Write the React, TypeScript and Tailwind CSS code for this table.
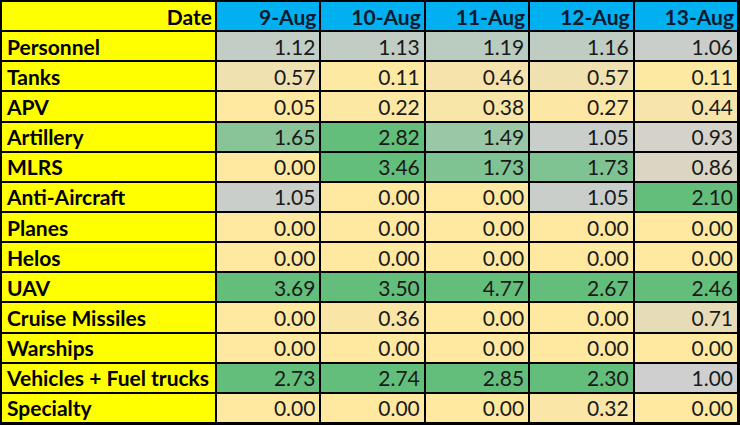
const dates = ['9-Aug', '10-Aug', '11-Aug', '12-Aug', '13-Aug'];

const rows: [string, number[]][] = [
  ['Personnel', [1.12, 1.13, 1.19, 1.16, 1.06]],
  ['Tanks', [0.57, 0.11, 0.46, 0.57, 0.11]],
  ['APV', [0.05, 0.22, 0.38, 0.27, 0.44]],
  ['Artillery', [1.65, 2.82, 1.49, 1.05, 0.93]],
  ['MLRS', [0.0, 3.46, 1.73, 1.73, 0.86]],
  ['Anti-Aircraft', [1.05, 0.0, 0.0, 1.05, 2.1]],
  ['Planes', [0.0, 0.0, 0.0, 0.0, 0.0]],
  ['Helos', [0.0, 0.0, 0.0, 0.0, 0.0]],
  ['UAV', [3.69, 3.5, 4.77, 2.67, 2.46]],
  ['Cruise Missiles', [0.0, 0.36, 0.0, 0.0, 0.71]],
  ['Warships', [0.0, 0.0, 0.0, 0.0, 0.0]],
  ['Vehicles + Fuel trucks', [2.73, 2.74, 2.85, 2.3, 1.0]],
  ['Specialty', [0.0, 0.0, 0.0, 0.32, 0.0]],
];

const LOW = [255, 233, 161];
const MID = [207, 207, 207];
const HIGH = [99, 190, 123];

function mix(a: number[], b: number[], t: number) {
  const c = a.map((x, i) => Math.round(x + (b[i] - x) * t));
  return `rgb(${c[0]}, ${c[1]}, ${c[2]})`;
}

// three colour scale: beige at 0, grey around 1, green from 2 up
function scale(v: number) {
  if (v <= 1) return mix(LOW, MID, Math.pow(Math.max(v, 0), 2));
  return mix(MID, HIGH, Math.min(v - 1, 1));
}

export default function App() {
  return (
    <div
      className="grid h-[425px] w-[740px] grid-cols-[213px_repeat(5,1fr)] grid-rows-[repeat(14,1fr)] gap-[2px] bg-black pt-[2px] pr-[3px] pb-[3px] pl-[2px] text-[21px] leading-none"
      style={{ fontFamily: 'Lato, "Open Sans", sans-serif' }}
    >
      <div className="flex items-center justify-end bg-[#ffff00] pr-[3px] font-bold text-black">Date</div>
      {dates.map((d) => (
        <div key={d} className="flex items-center justify-end bg-[#00b0f0] pr-[3px] font-bold text-[#0b1a2c]">
          {d}
        </div>
      ))}
      {rows.map(([label, values]) => (
        <>
          <div key={label} className="flex items-center bg-[#ffff00] pl-[5px] font-bold text-black">
            {label}
          </div>
          {values.map((v, i) => (
            <div
              key={label + i}
              className="flex items-center justify-end pr-[4px] text-[#1a1a1a]"
              style={{ backgroundColor: scale(v) }}
            >
              {v.toFixed(2)}
            </div>
          ))}
        </>
      ))}
    </div>
  );
}
